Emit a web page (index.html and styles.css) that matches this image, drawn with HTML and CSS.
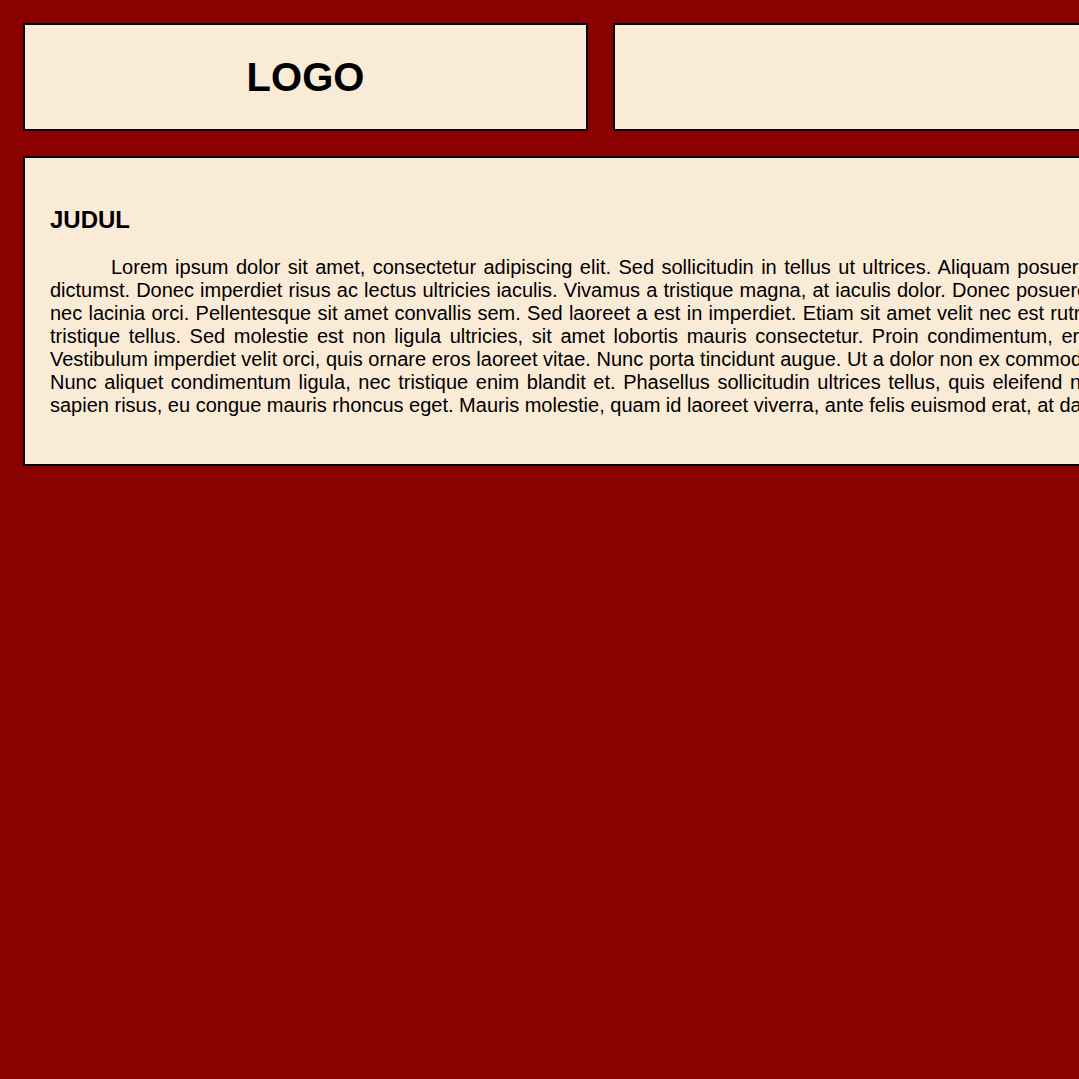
FILE: index.html
```html
<!DOCTYPE html>
<html lang="id">
<head>
<meta charset="utf-8">
<title>Judul</title>
<link rel="stylesheet" href="styles.css">
</head>
<body>
<div class="page">
  <header class="header">
    <div class="logo">LOGO</div>
    <div class="banner"></div>
  </header>
  <main class="content">
    <h2 class="title">JUDUL</h2>
    <p class="text">Lorem ipsum dolor sit amet, consectetur adipiscing elit. Sed sollicitudin in tellus ut ultrices. Aliquam posuere vel lorem dictumst. Donec imperdiet risus ac lectus ultricies iaculis. Vivamus a tristique magna, at iaculis dolor. Donec posuere habitasse nec lacinia orci. Pellentesque sit amet convallis sem. Sed laoreet a est in imperdiet. Etiam sit amet velit nec est rutrum tempus tristique tellus. Sed molestie est non ligula ultricies, sit amet lobortis mauris consectetur. Proin condimentum, erat nec erat Vestibulum imperdiet velit orci, quis ornare eros laoreet vitae. Nunc porta tincidunt augue. Ut a dolor non ex commodo vel lorem Nunc aliquet condimentum ligula, nec tristique enim blandit et. Phasellus sollicitudin ultrices tellus, quis eleifend nec dapibus sapien risus, eu congue mauris rhoncus eget. Mauris molestie, quam id laoreet viverra, ante felis euismod erat, at dapibus.</p>
  </main>
</div>
</body>
</html>
```
FILE: styles.css
```css
html, body {
  margin: 0;
  background: #8b0000;
}

body {
  font-family: "Liberation Sans", Arial, sans-serif;
  color: #000;
}

.page {
  width: max-content;
  padding: 23px;
}

.header {
  display: flex;
  gap: 25px;
}

.logo {
  flex: 0 0 565px;
  box-sizing: border-box;
  height: 108px;
  border: 2px solid #000;
  background: #faebd7;
  display: flex;
  align-items: center;
  justify-content: center;
  font-size: 40px;
  font-weight: bold;
}

.banner {
  flex: 1 1 auto;
  box-sizing: border-box;
  height: 108px;
  border: 2px solid #000;
  background: #faebd7;
}

.content {
  margin-top: 25px;
  width: 1130px;
  padding: 25px;
  border: 2px solid #000;
  background: #faebd7;
}

.title {
  margin: 23px 0 22px;
  font-size: 24px;
  font-weight: bold;
  line-height: normal;
}

.text {
  margin: 0 0 22px;
  font-size: 20px;
  line-height: normal;
  text-align: justify;
  text-indent: 61px;
}
```
